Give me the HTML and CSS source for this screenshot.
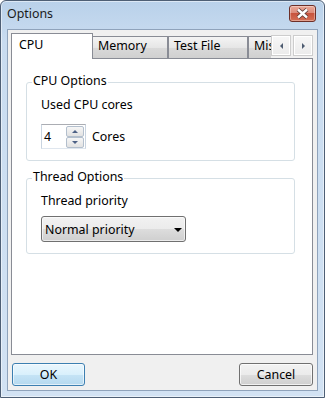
FILE: index.html
```html
<!DOCTYPE html>
<html lang="en">
<head>
  <meta charset="UTF-8">
  <title>Options</title>
  <link rel="stylesheet" href="styles.css">
</head>
<body>
  <div class="window">
    <div class="titlebar">
      <span class="title">Options</span>
      <div class="close">
        <svg width="25" height="15" viewBox="0 0 25 15">
          <path d="M8 3.5 L17 11.5 M17 3.5 L8 11.5" stroke="#5a3a35" stroke-width="4.2" fill="none"/>
          <path d="M8 3.5 L17 11.5 M17 3.5 L8 11.5" stroke="#ffffff" stroke-width="2.4" fill="none"/>
        </svg>
      </div>
    </div>

    <div class="client">
      <!-- tab strip -->
      <div class="tabs">
        <div class="tab active">CPU</div>
        <div class="tab tab-memory">Memory</div>
        <div class="tab tab-file">Test File</div>
        <div class="tab tab-misc">Misc</div>
        <div class="tab-scroll">
          <span class="scroll-btn"><i class="arrow-left"></i></span>
          <span class="scroll-btn"><i class="arrow-right"></i></span>
        </div>
      </div>

      <div class="panel">
        <fieldset class="group">
          <legend>CPU Options</legend>
          <div class="label">Used CPU cores</div>
          <div class="spin-row">
            <div class="spin">
              <span class="spin-value">4</span>
              <div class="spin-btns">
                <span class="spin-btn"><i class="arrow-up"></i></span>
                <span class="spin-btn"><i class="arrow-down"></i></span>
              </div>
            </div>
            <span>Cores</span>
          </div>
        </fieldset>

        <fieldset class="group group-thread">
          <legend>Thread Options</legend>
          <div class="label">Thread priority</div>
          <div class="select">
            <span>Normal priority</span>
            <i class="select-arrow"></i>
          </div>
        </fieldset>
      </div>

      <div class="buttons">
        <button class="btn btn-default">OK</button>
        <button class="btn btn-cancel">Cancel</button>
      </div>
    </div>
  </div>
</body>
</html>
```

FILE: styles.css
```css
body {
  margin: 0;
  font-family: "Noto Sans", "Segoe UI", sans-serif;
  font-size: 12.4px;
  color: #000;
  background: #fff;
}

.window {
  width: 325px;
  height: 398px;
  box-sizing: border-box;
  border: 1px solid #4e5f75;
  border-radius: 6px 6px 0 0;
  background: linear-gradient(#b9d1ea, #c9dcf0 40px, #d2e2f3);
  box-shadow: inset 0 0 0 1px rgba(255, 255, 255, 0.5);
  display: flex;
  flex-direction: column;
}

.titlebar {
  height: 28px;
  box-sizing: border-box;
  display: flex;
  align-items: flex-start;
  justify-content: space-between;
  padding: 5px 8px 0 6px;
}
.title {
  line-height: 15px;
  color: #1b1b1b;
}
.close {
  width: 27px;
  height: 17px;
  margin-top: -1px;
  box-sizing: border-box;
  border: 1px solid #6d2f28;
  border-radius: 3px;
  background: linear-gradient(#eaa899, #dc8c7b 45%, #c8543e 50%, #d46f55);
  box-shadow: inset 0 0 0 1px rgba(255, 255, 255, 0.35);
}
.close svg {
  display: block;
}

.client {
  height: 362px;
  margin: 0 6px;
  box-sizing: border-box;
  border: 1px solid #8fa3bb;
  background: #f0f0f0;
  padding: 3px 4px 4px 3px;
  display: flex;
  flex-direction: column;
}

/* tabs */
.tabs {
  position: relative;
  z-index: 1;
  height: 26px;
  margin-bottom: -1px;
  display: flex;
  align-items: flex-end;
}
.tab {
  height: 22px;
  box-sizing: border-box;
  margin-bottom: 1px;
  padding: 1px 0 0 5px;
  line-height: 15px;
  border: 1px solid #898c95;
  border-bottom: none;
  background: linear-gradient(#f4f4f4, #e6e6e6 50%, #d9d9d9 52%, #d0d0d0);
}
.tab.active {
  position: relative;
  z-index: 1;
  width: 82px;
  height: 26px;
  margin-bottom: 0;
  padding: 3px 0 0 7px;
  background: #fff;
}
.tab-memory {
  width: 76px;
  margin-left: -1px;
}
.tab-file {
  width: 80px;
}
.tab-misc {
  width: 60px;
}
.tab-scroll {
  position: absolute;
  right: 0;
  top: 0;
  bottom: 1px;
  z-index: 2;
  width: 42px;
  padding-top: 2px;
  box-sizing: border-box;
  background: #f0f0f0;
  display: flex;
  justify-content: space-between;
  align-items: flex-start;
}
.scroll-btn {
  width: 20px;
  height: 21px;
  box-sizing: border-box;
  border: 1px solid #cdcdcd;
  background: linear-gradient(#f7f7f7, #ebebeb);
  box-shadow: inset 0 0 0 1px #fff;
  display: flex;
  align-items: center;
  justify-content: center;
}
.arrow-left,
.arrow-right {
  width: 0;
  height: 0;
  border-top: 3px solid transparent;
  border-bottom: 3px solid transparent;
}
.arrow-left {
  border-right: 3px solid #4d5b70;
}
.arrow-right {
  border-left: 3px solid #4d5b70;
}

/* panel */
.panel {
  flex: 1;
  background: #fff;
  border: 1px solid #898c95;
  display: flex;
  flex-direction: column;
}

.group {
  margin: 14px 17px 0 14px;
  padding: 0 0 11px 5px;
  border: 1px solid #d5dfe5;
  border-radius: 3px;
  min-width: 0;
}
.group-thread {
  margin-top: 8px;
}
.group legend {
  padding: 0 1px 3px;
  line-height: 15px;
}
.label {
  margin: 6px 0 0 9px;
  line-height: 15px;
}

.spin-row {
  margin: 12px 0 0 9px;
  display: flex;
  align-items: center;
  gap: 6px;
  line-height: 15px;
}
.spin {
  width: 45px;
  height: 25px;
  box-sizing: border-box;
  border: 1px solid;
  border-color: #abadb3 #c9d4e0 #dfe6ee #c9d4e0;
  background: #fff;
  padding: 1px 1px 0 2px;
  display: flex;
  justify-content: space-between;
}
.spin-value {
  line-height: 22px;
}
.spin-btns {
  display: flex;
  flex-direction: column;
}
.spin-btn {
  width: 18px;
  height: 11px;
  box-sizing: border-box;
  border: 1px solid #b3bfcd;
  border-radius: 2px;
  background: linear-gradient(#f6f6f6, #e2e2e2);
  display: flex;
  align-items: center;
  justify-content: center;
}
.arrow-up,
.arrow-down {
  width: 0;
  height: 0;
  border-left: 3px solid transparent;
  border-right: 3px solid transparent;
}
.arrow-up {
  border-bottom: 3px solid #4d6185;
}
.arrow-down {
  border-top: 3px solid #4d6185;
}

.select {
  width: 145px;
  height: 26px;
  margin: 8px 0 0 9px;
  box-sizing: border-box;
  border: 1px solid #707070;
  border-radius: 3px;
  background: linear-gradient(#f2f2f2, #ebebeb 50%, #dddddd 50%, #cfcfcf);
  box-shadow: inset 0 0 0 1px rgba(255, 255, 255, 0.6);
  padding: 0 3px 0 3px;
  display: flex;
  align-items: center;
  justify-content: space-between;
  line-height: 15px;
}
.select-arrow {
  width: 0;
  height: 0;
  border-left: 4px solid transparent;
  border-right: 4px solid transparent;
  border-top: 4px solid #000;
  margin-top: 1px;
}

/* bottom buttons */
.buttons {
  margin-top: 8px;
  padding-left: 1px;
  display: flex;
  justify-content: space-between;
}
.btn {
  height: 23px;
  padding: 0;
  font-family: inherit;
  font-size: 12.4px;
  color: #000;
  border: 1px solid #707070;
  border-radius: 3px;
  background: linear-gradient(#f2f2f2, #ebebeb 50%, #dddddd 50%, #cfcfcf);
  box-shadow: inset 0 0 0 1px rgba(255, 255, 255, 0.7);
}
.btn-default {
  width: 73px;
  border-color: #3c7fb1;
  background: linear-gradient(#eaf6fd, #d9f0fc 50%, #c6e4f6 50%, #b5d9ef);
  box-shadow: inset 0 0 0 1px rgba(255, 255, 255, 0.6);
}
.btn-cancel {
  width: 74px;
}
```
